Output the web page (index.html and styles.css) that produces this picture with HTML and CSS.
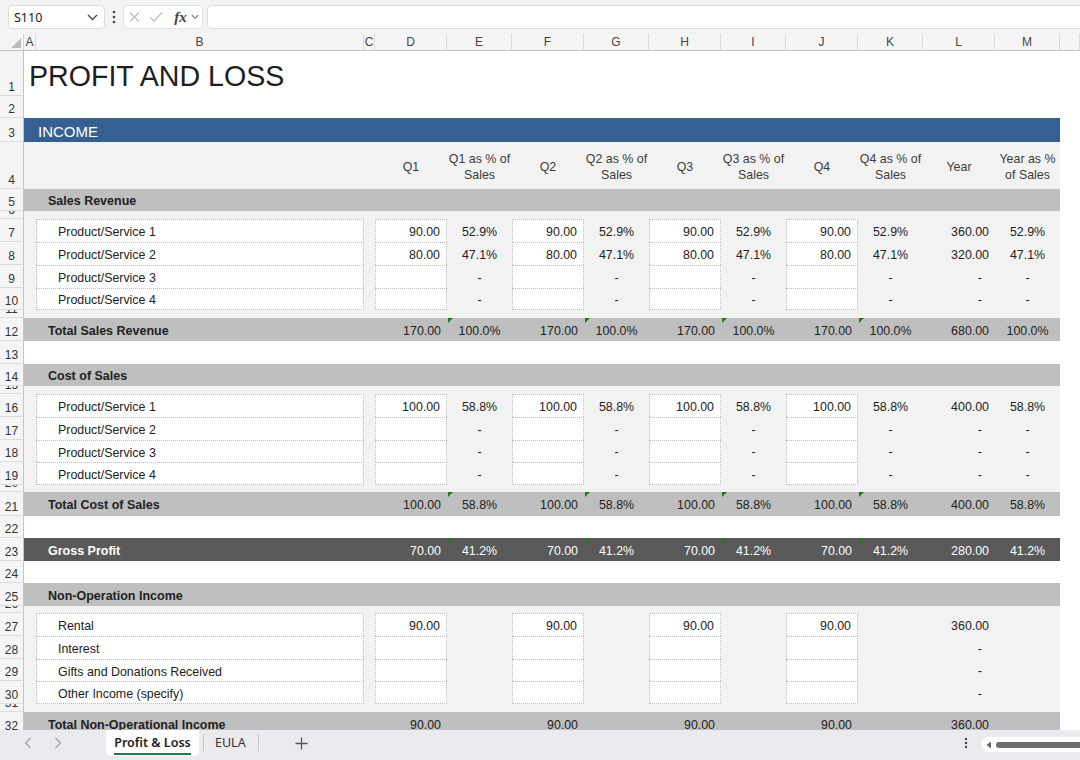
FILE: index.html
```html
<!DOCTYPE html>
<html>
<head>
<meta charset="utf-8">
<link rel="stylesheet" href="styles.css">
</head>
<body>
<div class="app">
  <div class="toolbar">
    <div class="namebox"><span>S110</span>
      <svg width="11" height="7" viewBox="0 0 11 7"><path d="M1 1l4.5 4.5L10 1" fill="none" stroke="#444" stroke-width="1.3"/></svg>
    </div>
    <div class="vdots"><svg width="4" height="14" viewBox="0 0 4 14"><circle cx="2" cy="2" r="1.3" fill="#444"/><circle cx="2" cy="7" r="1.3" fill="#444"/><circle cx="2" cy="12" r="1.3" fill="#444"/></svg></div>
    <div class="fbox">
      <svg class="ic" width="14" height="14" viewBox="0 0 14 14"><path d="M2 2l10 10M12 2L2 12" stroke="#b3b3b3" stroke-width="1.2" fill="none"/></svg>
      <svg class="ic" width="16" height="14" viewBox="0 0 16 14"><path d="M1.5 7.5l4 4L14.5 2" stroke="#b3b3b3" stroke-width="1.2" fill="none"/></svg>
      <span class="fx">fx</span>
      <svg width="9" height="6" viewBox="0 0 9 6"><path d="M1 1l3.5 3.5L8 1" fill="none" stroke="#666" stroke-width="1.1"/></svg>
    </div>
    <div class="formula"></div>
  </div>

  <div class="colhead">
    <div class="corner"><svg width="10" height="10" viewBox="0 0 10 10"><path d="M10 0V10H0z" fill="#bdbdbd"/></svg></div>
    <div class="letters">
      <div>A</div><div>B</div><div>C</div><div>D</div><div>E</div><div>F</div><div>G</div><div>H</div><div>I</div><div>J</div><div>K</div><div>L</div><div>M</div><div></div>
    </div>
  </div>

  <div class="sheet">
    <div class="row r45"><div class="rh">1</div><div class="band"><div class="title">PROFIT AND LOSS</div></div></div>
    <div class="row r22"><div class="rh">2</div><div class="band"></div></div>
    <div class="row r24"><div class="rh">3</div><div class="band bl"><div class="banner">INCOME</div></div></div>
    <div class="row r47"><div class="rh">4</div><div class="band lt hd">
      <div class="d p">Q1</div><div class="e p">Q1 as % of<br>Sales</div>
      <div class="f p">Q2</div><div class="g p">Q2 as % of<br>Sales</div>
      <div class="h p">Q3</div><div class="i p">Q3 as % of<br>Sales</div>
      <div class="j p">Q4</div><div class="k p">Q4 as % of<br>Sales</div>
      <div class="l p">Year</div><div class="m p">Year as %<br>of Sales</div>
    </div></div>
    <div class="row r22"><div class="rh">5</div><div class="band gy"><div class="b sec">Sales Revenue</div></div></div>
    <div class="row r8"><div class="rh">6</div><div class="band lt"></div></div>
    <div class="row r23"><div class="rh">7</div><div class="band lt">
      <div class="b in lbl">Product/Service 1</div>
      <div class="d in n">90.00</div><div class="e p">52.9%</div>
      <div class="f in n">90.00</div><div class="g p">52.9%</div>
      <div class="h in n">90.00</div><div class="i p">52.9%</div>
      <div class="j in n">90.00</div><div class="k p">52.9%</div>
      <div class="l n">360.00</div><div class="m p">52.9%</div>
    </div></div>
    <div class="row r23"><div class="rh">8</div><div class="band lt">
      <div class="b in lbl">Product/Service 2</div>
      <div class="d in n">80.00</div><div class="e p">47.1%</div>
      <div class="f in n">80.00</div><div class="g p">47.1%</div>
      <div class="h in n">80.00</div><div class="i p">47.1%</div>
      <div class="j in n">80.00</div><div class="k p">47.1%</div>
      <div class="l n">320.00</div><div class="m p">47.1%</div>
    </div></div>
    <div class="row r23"><div class="rh">9</div><div class="band lt">
      <div class="b in lbl">Product/Service 3</div>
      <div class="d in n"></div><div class="e p">-</div>
      <div class="f in n"></div><div class="g p">-</div>
      <div class="h in n"></div><div class="i p">-</div>
      <div class="j in n"></div><div class="k p">-</div>
      <div class="l n dash">-</div><div class="m p">-</div>
    </div></div>
    <div class="row r22 last"><div class="rh">10</div><div class="band lt">
      <div class="b in lbl">Product/Service 4</div>
      <div class="d in n"></div><div class="e p">-</div>
      <div class="f in n"></div><div class="g p">-</div>
      <div class="h in n"></div><div class="i p">-</div>
      <div class="j in n"></div><div class="k p">-</div>
      <div class="l n dash">-</div><div class="m p">-</div>
    </div></div>
    <div class="row r8"><div class="rh">11</div><div class="band lt"></div></div>
    <div class="row r23"><div class="rh">12</div><div class="band gy">
      <div class="b sec">Total Sales Revenue</div>
      <div class="d n">170.00</div><div class="e p t">100.0%</div>
      <div class="f n">170.00</div><div class="g p t">100.0%</div>
      <div class="h n">170.00</div><div class="i p t">100.0%</div>
      <div class="j n">170.00</div><div class="k p t">100.0%</div>
      <div class="l n">680.00</div><div class="m p">100.0%</div>
    </div></div>
    <div class="row r23"><div class="rh">13</div><div class="band"></div></div>
    <div class="row r22"><div class="rh">14</div><div class="band gy"><div class="b sec">Cost of Sales</div></div></div>
    <div class="row r8"><div class="rh">15</div><div class="band lt"></div></div>
    <div class="row r23"><div class="rh">16</div><div class="band lt">
      <div class="b in lbl">Product/Service 1</div>
      <div class="d in n">100.00</div><div class="e p">58.8%</div>
      <div class="f in n">100.00</div><div class="g p">58.8%</div>
      <div class="h in n">100.00</div><div class="i p">58.8%</div>
      <div class="j in n">100.00</div><div class="k p">58.8%</div>
      <div class="l n">400.00</div><div class="m p">58.8%</div>
    </div></div>
    <div class="row r23"><div class="rh">17</div><div class="band lt">
      <div class="b in lbl">Product/Service 2</div>
      <div class="d in n"></div><div class="e p">-</div>
      <div class="f in n"></div><div class="g p">-</div>
      <div class="h in n"></div><div class="i p">-</div>
      <div class="j in n"></div><div class="k p">-</div>
      <div class="l n dash">-</div><div class="m p">-</div>
    </div></div>
    <div class="row r22"><div class="rh">18</div><div class="band lt">
      <div class="b in lbl">Product/Service 3</div>
      <div class="d in n"></div><div class="e p">-</div>
      <div class="f in n"></div><div class="g p">-</div>
      <div class="h in n"></div><div class="i p">-</div>
      <div class="j in n"></div><div class="k p">-</div>
      <div class="l n dash">-</div><div class="m p">-</div>
    </div></div>
    <div class="row r23 last"><div class="rh">19</div><div class="band lt">
      <div class="b in lbl">Product/Service 4</div>
      <div class="d in n"></div><div class="e p">-</div>
      <div class="f in n"></div><div class="g p">-</div>
      <div class="h in n"></div><div class="i p">-</div>
      <div class="j in n"></div><div class="k p">-</div>
      <div class="l n dash">-</div><div class="m p">-</div>
    </div></div>
    <div class="row r7"><div class="rh">20</div><div class="band lt"></div></div>
    <div class="row r24"><div class="rh">21</div><div class="band gy">
      <div class="b sec">Total Cost of Sales</div>
      <div class="d n">100.00</div><div class="e p t">58.8%</div>
      <div class="f n">100.00</div><div class="g p t">58.8%</div>
      <div class="h n">100.00</div><div class="i p t">58.8%</div>
      <div class="j n">100.00</div><div class="k p t">58.8%</div>
      <div class="l n">400.00</div><div class="m p">58.8%</div>
    </div></div>
    <div class="row r22"><div class="rh">22</div><div class="band"></div></div>
    <div class="row r23"><div class="rh">23</div><div class="band dk">
      <div class="b sec">Gross Profit</div>
      <div class="d n">70.00</div><div class="e p t">41.2%</div>
      <div class="f n">70.00</div><div class="g p t">41.2%</div>
      <div class="h n">70.00</div><div class="i p t">41.2%</div>
      <div class="j n">70.00</div><div class="k p t">41.2%</div>
      <div class="l n">280.00</div><div class="m p">41.2%</div>
    </div></div>
    <div class="row r22"><div class="rh">24</div><div class="band"></div></div>
    <div class="row r23"><div class="rh">25</div><div class="band gy"><div class="b sec">Non-Operation Income</div></div></div>
    <div class="row r7"><div class="rh">26</div><div class="band lt"></div></div>
    <div class="row r23"><div class="rh">27</div><div class="band lt">
      <div class="b in lbl">Rental</div>
      <div class="d in n">90.00</div>
      <div class="f in n">90.00</div>
      <div class="h in n">90.00</div>
      <div class="j in n">90.00</div>
      <div class="l n">360.00</div>
    </div></div>
    <div class="row r23"><div class="rh">28</div><div class="band lt">
      <div class="b in lbl">Interest</div>
      <div class="d in n"></div><div class="f in n"></div><div class="h in n"></div><div class="j in n"></div>
      <div class="l n dash">-</div>
    </div></div>
    <div class="row r22"><div class="rh">29</div><div class="band lt">
      <div class="b in lbl">Gifts and Donations Received</div>
      <div class="d in n"></div><div class="f in n"></div><div class="h in n"></div><div class="j in n"></div>
      <div class="l n dash">-</div>
    </div></div>
    <div class="row r23 last"><div class="rh">30</div><div class="band lt">
      <div class="b in lbl">Other Income (specify)</div>
      <div class="d in n"></div><div class="f in n"></div><div class="h in n"></div><div class="j in n"></div>
      <div class="l n dash">-</div>
    </div></div>
    <div class="row r8"><div class="rh">31</div><div class="band lt"></div></div>
    <div class="row r23"><div class="rh">32</div><div class="band gy">
      <div class="b sec">Total Non-Operational Income</div>
      <div class="d n">90.00</div>
      <div class="f n">90.00</div>
      <div class="h n">90.00</div>
      <div class="j n">90.00</div>
      <div class="l n">360.00</div>
    </div></div>
  </div>

  <div class="tabbar">
    <div class="nav">
      <svg width="8" height="12" viewBox="0 0 8 12"><path d="M6.5 1L1.5 6l5 5" fill="none" stroke="#a0a0a0" stroke-width="1.2"/></svg>
      <svg width="8" height="12" viewBox="0 0 8 12"><path d="M1.5 1l5 5-5 5" fill="none" stroke="#a0a0a0" stroke-width="1.2"/></svg>
    </div>
    <div class="tab active"><span>Profit &amp; Loss</span></div>
    <div class="sep"></div>
    <div class="tab"><span>EULA</span></div>
    <div class="sep"></div>
    <div class="plus"><svg width="13" height="13" viewBox="0 0 13 13"><path d="M6.5 0.5v12M0.5 6.5h12" stroke="#555" stroke-width="1.3"/></svg></div>
    <div class="spacer"></div>
    <div class="tdots"><svg width="4" height="12" viewBox="0 0 4 12"><circle cx="2" cy="2" r="1.2" fill="#444"/><circle cx="2" cy="6" r="1.2" fill="#444"/><circle cx="2" cy="10" r="1.2" fill="#444"/></svg></div>
    <div class="scroll">
      <svg width="6" height="8" viewBox="0 0 6 8"><path d="M5 0.5V7.5L0.5 4z" fill="#666"/></svg>
      <div class="thumb"></div>
    </div>
  </div>
</div>
</body>
</html>
```

FILE: styles.css
```css
* { box-sizing: border-box; margin: 0; padding: 0; }
html, body { width: 1080px; height: 760px; overflow: hidden; }
body { font-family: "Liberation Sans", Arial, sans-serif; background: #fff; color: #222; }
.app { display: flex; flex-direction: column; height: 760px; }

/* toolbar */
.toolbar { height: 34px; flex: none; background: #f3f3f3; display: flex; align-items: center; padding-left: 8px; }
.namebox { width: 97px; height: 24px; background: #fff; border: 1px solid #dcdcdc; border-radius: 4px; display: flex; align-items: center; justify-content: space-between; padding: 0 6px 0 5px; font-family: "Noto Sans", sans-serif; font-size: 12.5px; color: #222; }
.vdots { width: 18px; display: flex; justify-content: center; }
.fbox { width: 80px; height: 24px; background: #fff; border: 1px solid #e2e2e2; border-radius: 4px; display: flex; align-items: center; padding: 0 3px 0 4px; gap: 8px; }
.fx { font-family: "Liberation Serif", serif; font-style: italic; font-weight: bold; font-size: 15px; color: #444; margin-left: 3px; margin-right: -4px; }
.formula { flex: 1; height: 24px; margin-left: 4px; margin-right: -6px; background: #fff; border: 1px solid #dcdcdc; border-radius: 4px; }

/* column headers */
.colhead { height: 17px; flex: none; display: flex; background: #f5f5f5; border-bottom: 1px solid #c4c4c4; }
.corner { width: 24px; flex: none; display: flex; align-items: flex-end; justify-content: flex-end; padding: 0 2px 2px 0; border-right: 1px solid #d4d4d4; }
.letters { flex: 1; display: grid; grid-template-columns: 12px 328px 11px 72px 65px 72px 65px 72px 65px 72px 65px 72px 65px 1fr; }
.letters div { border-right: 1px solid #dadada; text-align: center; font-size: 12px; line-height: 17px; color: #444; }

/* sheet */
.sheet { height: 679px; flex: none; overflow: hidden; }
.row { display: flex; }
.r45 { height: 45px; } .r22 { height: 22px; } .r23 { height: 23px; } .r24 { height: 24px; }
.r47 { height: 47px; } .r8 { height: 8px; } .r7 { height: 7px; }
.rh { width: 24px; flex: none; background: #f5f5f5; border-right: 1px solid #c4c4c4; border-bottom: 1px solid #dcdcdc; font-size: 12px; line-height: 14px; color: #333; display: flex; align-items: flex-end; justify-content: center; overflow: hidden; padding-bottom: 1px; }
.band { width: 1036px; flex: none; display: grid; grid-template-columns: 12px 328px 11px 72px 65px 72px 65px 72px 65px 72px 65px 72px 65px; grid-template-rows: 100%; font-size: 12.4px; }
.band > div { display: flex; align-items: center; white-space: nowrap; min-width: 0; padding-top: 2px; }
.lt { background: #f2f2f2; }
.gy { background: #bfbfbf; }
.dk { background: #595959; color: #fff; }
.bl { background: #366092; color: #fff; }

.band > .title { grid-column: 1 / -1; padding-left: 5px; padding-top: 5px; font-size: 28.6px; color: #1e1e1e; }
.banner { grid-column: 1 / -1; padding-left: 14px; font-size: 15px; }
.hd { color: #3c3c3c; }
.hd > div { text-align: center; line-height: 16px; }

.b { grid-column: 2; } .d { grid-column: 4; } .e { grid-column: 5; } .f { grid-column: 6; }
.g { grid-column: 7; } .h { grid-column: 8; } .i { grid-column: 9; } .j { grid-column: 10; }
.k { grid-column: 11; } .l { grid-column: 12; } .m { grid-column: 13; }

.lbl { padding-left: 21px; }
.sec { padding-left: 12px; font-weight: bold; font-size: 12.5px; }
.n { justify-content: flex-end; padding-right: 6px; }
.p { justify-content: center; }
.dash { padding-right: 13px; }
.in { background: #fff; border: 1px dotted #bcbcbc; border-bottom: none; }
.last .in { border-bottom: 1px dotted #bcbcbc; }
.t { position: relative; }
.t::before { content: ""; position: absolute; left: 1px; top: 0; border-top: 5px solid #1b7d1b; border-right: 5px solid transparent; }

/* tab bar */
.tabbar { height: 30px; flex: none; background: #eaebee; display: flex; align-items: flex-start; font-family: "Noto Sans", sans-serif; }
.nav { width: 106px; height: 26px; display: flex; align-items: center; gap: 22px; padding-left: 24px; }
.tab { height: 26px; padding: 0 8px; display: flex; align-items: center; font-size: 12.5px; color: #333; }
.tab span { display: block; line-height: 22px; }
.tab.active { width: 93px; background: #fff; border-radius: 0 0 5px 5px; justify-content: center; font-weight: 600; color: #222; }
.tab.active span { border-bottom: 2px solid #1e7b45; line-height: 20px; margin-top: 2px; }
.sep { width: 1px; height: 17px; background: #c8c8c8; margin: 4px 4px 0; }
.tab:not(.active) { padding: 0 8px 0 7px; }
.plus { width: 78px; height: 26px; display: flex; align-items: center; justify-content: center; }
.spacer { flex: 1; }
.tdots { width: 16px; height: 26px; display: flex; align-items: center; justify-content: center; margin-right: 7px; }
.scroll { width: 100px; height: 15px; margin-top: 7px; margin-right: -1px; background: #fff; border-radius: 8px 0 0 8px; display: flex; align-items: center; padding-left: 5px; gap: 4px; }
.thumb { flex: 1; height: 6px; background: #6e6e6e; border-radius: 3px 0 0 3px; }
```
